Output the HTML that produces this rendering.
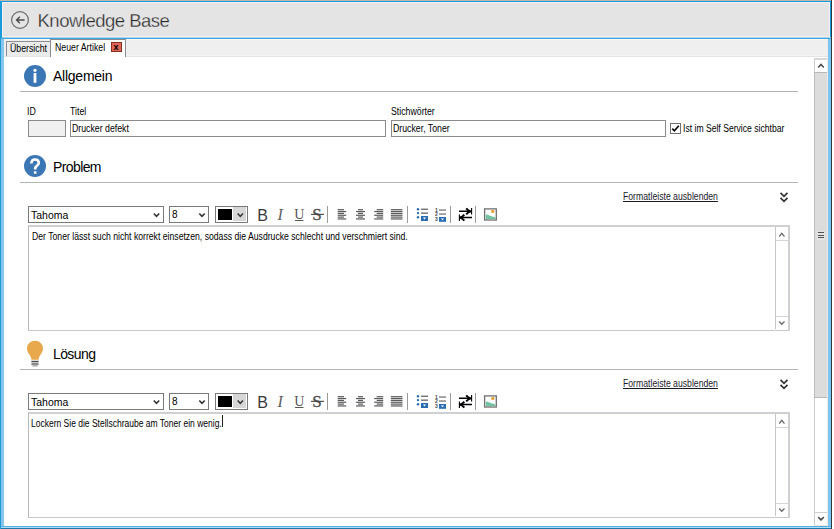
<!DOCTYPE html>
<html><head><meta charset="utf-8">
<style>
*{box-sizing:border-box;margin:0;padding:0}
html,body{width:834px;height:529px;overflow:hidden;background:#fff}
body{position:relative;font-family:"Liberation Sans",sans-serif;color:#000}
.a{position:absolute}
.t{position:absolute;white-space:nowrap;line-height:1}
.lnk{font-size:10px;text-decoration:underline;color:#1a1a2a;transform:scaleX(0.867);transform-origin:0 0}
.cmb{border:1px solid #7a7a7a;background:#fff}
.ta{border:2px solid #d0d0d4;border-left:1px solid #b8b8bc;border-bottom:1px solid #c8c8cc;background:#fff}
.txt{font-size:10px;transform:scaleX(0.866);transform-origin:0 0}
.s{font-size:10px;transform:scaleX(0.875);transform-origin:0 0}
.h{font-size:14px;letter-spacing:-0.6px}
</style></head><body>
<!-- window chrome -->
<div class="a" style="left:0;top:0;width:831px;height:1px;background:#bdb8b4"></div>
<div class="a" style="left:831px;top:0;width:1px;height:529px;background:#303840"></div>
<div class="a" style="left:832px;top:0;width:2px;height:529px;background:#fff"></div>
<!-- header -->
<div class="a" style="left:0;top:1px;width:831px;height:37px;background:#1a9ad6"></div>
<div class="a" style="left:2px;top:2px;width:828px;height:36px;background:#f2f0f6"></div>
<div class="a" style="left:3px;top:3px;width:826px;height:33px;background:#e4e4e4"></div>
<div class="a" style="left:3px;top:36px;width:826px;height:1px;background:#f4eeee"></div>
<div class="a" style="left:2px;top:37px;width:829px;height:1px;background:#a8d4ec"></div>
<div class="a" style="left:0;top:38px;width:831px;height:1px;background:#40a8da"></div>
<!-- content frame -->
<div class="a" style="left:0;top:39px;width:1px;height:490px;background:#1a9ad6"></div>
<div class="a" style="left:1px;top:39px;width:3px;height:487px;background:#86c6ec"></div>
<div class="a" style="left:828px;top:39px;width:3px;height:487px;background:#7ac6f0"></div>
<div class="a" style="left:1px;top:526px;width:830px;height:1px;background:#50b0e0"></div>
<div class="a" style="left:1px;top:527px;width:830px;height:1px;background:#a8dcfa"></div>
<div class="a" style="left:1px;top:528px;width:830px;height:1px;background:#2078a8"></div>

<!-- back icon -->
<svg class="a" style="left:0;top:0" width="40" height="40" viewBox="0 0 40 40">
<circle cx="20" cy="20" r="8.4" fill="none" stroke="#6a6a6a" stroke-width="1.2"/>
<path d="M16.6 20H24.6M19.8 16.8L16.6 20L19.8 23.2" fill="none" stroke="#4a4a4a" stroke-width="1.4"/>
</svg>
<div class="t" style="left:37.5px;top:12px;font-size:18.5px;color:#2a2a2a;letter-spacing:-0.5px;-webkit-text-stroke:0.3px #e4e4e4">Knowledge Base</div>

<!-- tab strip -->
<div class="a" style="left:4px;top:39px;width:824px;height:18px;background:#efefef"></div>
<div class="a" style="left:4px;top:39px;width:824px;height:1px;background:#faf6f6"></div>
<div class="a" style="left:4px;top:55px;width:824px;height:1px;background:#f4f4f4"></div>
<div class="a" style="left:4px;top:56px;width:824px;height:1px;background:#e4e4e4"></div>
<!-- Übersicht tab -->
<div class="a" style="left:6px;top:41px;width:45px;height:15px;border:1px solid #8c8c94;border-bottom:none;background:#ebebeb"></div>
<div class="t s" style="left:10px;top:44px">Übersicht</div>
<!-- Neuer Artikel tab -->
<div class="a" style="left:50px;top:39px;width:76px;height:18px;border:1px solid #8c8c94;border-bottom:none;background:#fff"></div>
<div class="t s" style="left:55px;top:43px">Neuer Artikel</div>
<div class="a" style="left:111px;top:42px;width:11px;height:10px;background:#df6656;border:1px solid #8a2e24"></div>
<div class="t" style="left:113.5px;top:42.5px;font-size:9px;font-weight:bold">x</div>


<!-- ===== Allgemein ===== -->
<svg class="a" style="left:23px;top:64px" width="24" height="24" viewBox="0 0 24 24">
<circle cx="12" cy="12" r="11" fill="#3c77b5"/>
<rect x="10.6" y="9" width="2.8" height="9.8" fill="#fff"/>
<circle cx="12" cy="6.3" r="1.6" fill="#fff"/>
</svg>
<div class="t h" style="left:53px;top:69px;letter-spacing:-0.25px">Allgemein</div>
<div class="a" style="left:20px;top:91px;width:778px;height:1px;background:#b4b4b4"></div>

<div class="t s" style="left:27px;top:107px">ID</div>
<div class="t s" style="left:70px;top:107px">Titel</div>
<div class="t s" style="left:391px;top:107px">Stichwörter</div>
<div class="a" style="left:28px;top:120px;width:38px;height:17px;border:1px solid #8a8a8a;background:#f0f0f0"></div>
<div class="a" style="left:70px;top:120px;width:316px;height:17px;border:1px solid #8a8a8a;background:#fff"></div>
<div class="t s" style="left:72px;top:124px">Drucker defekt</div>
<div class="a" style="left:391px;top:120px;width:275px;height:17px;border:1px solid #8a8a8a;background:#fff"></div>
<div class="t s" style="left:392.5px;top:124px">Drucker, Toner</div>
<div class="a" style="left:670px;top:123px;width:11px;height:11px;border:1px solid #707070;background:#fff"></div>
<svg class="a" style="left:670px;top:123px" width="11" height="11" viewBox="0 0 11 11"><path d="M2.3 5.6L4.4 7.8L8.8 2.8" fill="none" stroke="#000" stroke-width="1.6"/></svg>
<div class="t s" style="left:683px;top:124px;transform:scaleX(0.86)">Ist im Self Service sichtbar</div>

<!-- ===== Problem ===== -->
<svg class="a" style="left:23px;top:154px" width="24" height="24" viewBox="0 0 24 24">
<circle cx="12" cy="12" r="11" fill="#3c77b5"/>
<path d="M8.4 9.4C8.4 7 10 5.5 12.1 5.5C14.3 5.5 15.8 7 15.8 8.9C15.8 11.3 12.2 11.8 12.2 14.6V15.4" fill="none" stroke="#fff" stroke-width="2.6"/>
<rect x="10.9" y="17.3" width="2.6" height="2.4" fill="#fff"/>
</svg>
<div class="t h" style="left:53px;top:160px">Problem</div>
<div class="a" style="left:20px;top:182px;width:778px;height:1px;background:#b4b4b4"></div>

<div class="t lnk" style="left:623px;top:192px">Formatleiste ausblenden</div>
<svg class="a" style="left:776px;top:188px" width="16" height="16" viewBox="776 188 16 16"><path d="M780.5 192.8L784 196.3L787.5 192.8M780.5 197.9L784 201.4L787.5 197.9" fill="none" stroke="#333" stroke-width="1.7"/></svg>
<div class="a cmb" style="left:28px;top:206px;width:136px;height:17px"></div>
<div class="t" style="left:31px;top:210px;font-size:10.5px">Tahoma</div>
<div class="a cmb" style="left:169px;top:206px;width:40px;height:17px"></div>
<div class="t" style="left:172px;top:209.5px;font-size:10px">8</div>
<div class="a cmb" style="left:215px;top:206px;width:33px;height:17px"></div>
<div class="a" style="left:218px;top:209px;width:14px;height:11px;background:#000"></div>
<div class="a" style="left:233px;top:207px;width:13px;height:14px;background:#d6d6d6"></div>
<svg class="a" style="left:230px;top:208px" width="20" height="12" viewBox="230 208 20 12"><path d="M237.6 213.5L240.3 216.3L243 213.5" fill="none" stroke="#3a3a3a" stroke-width="1.6"/></svg>
<svg class="a" style="left:150px;top:208px" width="60" height="12" viewBox="150 208 60 12"><path d="M153.8 213.5L156.5 216.3L159.2 213.5M199.3 213.5L202 216.3L204.7 213.5" fill="none" stroke="#333" stroke-width="1.6"/></svg>
<svg class="a" style="left:250px;top:204px" width="250" height="20" viewBox="0 0 250 20"><text x="7.2" y="16.5" font-size="16" font-family="Liberation Sans" fill="#3a3a3a">B</text><text x="27.4" y="16" font-size="16" font-family="Liberation Serif" font-style="italic" fill="#606060">I</text><text x="44.2" y="14.8" font-size="14" font-family="Liberation Serif" fill="#555">U</text><rect x="45" y="16" width="8.5" height="1" fill="#555"/><text x="62.2" y="16.3" font-size="17" font-family="Liberation Serif" fill="#505050" stroke="#505050" stroke-width="0.35">S</text><rect x="61" y="9.8" width="13" height="1.1" fill="#444"/><rect x="77" y="2" width="1" height="17" fill="#9a9a9a"/><rect x="157" y="2" width="1" height="17" fill="#9a9a9a"/><rect x="200" y="2" width="1" height="17" fill="#9a9a9a"/><rect x="225" y="2" width="1" height="17" fill="#9a9a9a"/><rect x="87.7" y="5.1" width="6.3" height="1.2" fill="#5a5a5a"/><rect x="87.7" y="6.95" width="8.5" height="1.2" fill="#5a5a5a"/><rect x="87.7" y="8.8" width="6.3" height="1.2" fill="#5a5a5a"/><rect x="87.7" y="10.65" width="8.5" height="1.2" fill="#5a5a5a"/><rect x="87.7" y="12.5" width="6.3" height="1.2" fill="#5a5a5a"/><rect x="87.7" y="14.35" width="8.5" height="1.2" fill="#5a5a5a"/><rect x="108.0" y="5.1" width="5" height="1.2" fill="#5a5a5a"/><rect x="106.0" y="6.95" width="9" height="1.2" fill="#5a5a5a"/><rect x="108.0" y="8.8" width="5" height="1.2" fill="#5a5a5a"/><rect x="106.0" y="10.65" width="9" height="1.2" fill="#5a5a5a"/><rect x="108.0" y="12.5" width="5" height="1.2" fill="#5a5a5a"/><rect x="106.0" y="14.35" width="9" height="1.2" fill="#5a5a5a"/><rect x="126.7" y="5.1" width="6.5" height="1.2" fill="#5a5a5a"/><rect x="124.2" y="6.95" width="9" height="1.2" fill="#5a5a5a"/><rect x="126.7" y="8.8" width="6.5" height="1.2" fill="#5a5a5a"/><rect x="124.2" y="10.65" width="9" height="1.2" fill="#5a5a5a"/><rect x="126.7" y="12.5" width="6.5" height="1.2" fill="#5a5a5a"/><rect x="124.2" y="14.35" width="9" height="1.2" fill="#5a5a5a"/><rect x="140.8" y="5.1" width="11.7" height="1.2" fill="#5a5a5a"/><rect x="140.8" y="6.95" width="11.7" height="1.2" fill="#5a5a5a"/><rect x="140.8" y="8.8" width="11.7" height="1.2" fill="#5a5a5a"/><rect x="140.8" y="10.65" width="11.7" height="1.2" fill="#5a5a5a"/><rect x="140.8" y="12.5" width="11.7" height="1.2" fill="#5a5a5a"/><rect x="140.8" y="14.35" width="11.7" height="1.2" fill="#5a5a5a"/></svg>
<svg class="a" style="left:415px;top:206px" width="34" height="17" viewBox="0 0 34 17">
<circle cx="3" cy="3.3" r="1.2" fill="#2a6db5"/><circle cx="3" cy="7.1" r="1.2" fill="#2a6db5"/><circle cx="3" cy="11.2" r="1.2" fill="#2a6db5"/>
<rect x="6" y="2.6" width="7" height="1.3" fill="#666"/><rect x="6" y="6.5" width="7" height="1.3" fill="#666"/>
<rect x="6" y="10" width="7" height="5" fill="#2a6db5"/><path d="M7.8 11.6H11.2L9.5 13.4Z" fill="#fff"/>
<text x="20" y="6.3" font-size="5" font-family="Liberation Sans" font-weight="bold" fill="#444">1</text>
<text x="20" y="10.3" font-size="5" font-family="Liberation Sans" font-weight="bold" fill="#444">2</text>
<text x="20" y="14.6" font-size="5" font-family="Liberation Sans" font-weight="bold" fill="#444">3</text>
<rect x="24" y="3.4" width="7" height="1.3" fill="#777"/><rect x="24" y="7.4" width="7" height="1.3" fill="#777"/>
<rect x="24" y="11" width="7" height="4.8" fill="#2a6db5"/><path d="M25.8 12.5H29.2L27.5 14.3Z" fill="#fff"/>
</svg>
<svg class="a" style="left:452px;top:204px" width="25" height="20" viewBox="452 204 25 20">
<path d="M459 211.3H470M459.8 217.6H472" fill="none" stroke="#000" stroke-width="1.5"/>
<path d="M466.2 208.3Q468 210.6 470.8 211.3Q468 212 466.2 214.3M464.3 214.6Q462.6 216.9 459.8 217.6Q462.6 218.3 464.3 220.6" fill="none" stroke="#000" stroke-width="1.9"/>
<path d="M471.6 208V214.6M459.4 214.5V220.9" fill="none" stroke="#000" stroke-width="1.1"/>
</svg>
<svg class="a" style="left:480px;top:204px" width="20" height="20" viewBox="480 204 20 20">
<rect x="484.6" y="208.9" width="11.7" height="11.1" fill="#fff" stroke="#6e6e6e" stroke-width="1.3"/>
<circle cx="492.8" cy="211.4" r="1.7" fill="#e8a23a"/>
<path d="M485.8 214.6C488.5 214.6 491 216.8 495.3 217.3V219H485.8Z" fill="#72c3a0"/>
</svg>
<div class="a ta" style="left:28px;top:225px;width:762px;height:106px"></div>
<div class="t txt" style="left:31.5px;top:231.5px">Der Toner lässt such nicht korrekt einsetzen, sodass die Ausdrucke schlecht und verschmiert sind.</div>
<div class="a" style="left:775px;top:227px;width:1px;height:102px;background:#c8c8c8"></div>
<div class="a" style="left:776px;top:240px;width:12px;height:1px;background:#d4d4d4"></div>
<div class="a" style="left:776px;top:316px;width:12px;height:1px;background:#d4d4d4"></div>
<svg class="a" style="left:775px;top:225px" width="14" height="106" viewBox="775 225 14 106"><path d="M779.2 236.6L781.8 233.3L784.5 236.6M779.2 321.5L781.8 324.2L784.5 321.5" fill="none" stroke="#6a6a6a" stroke-width="1.3"/></svg>

<!-- ===== Lösung ===== -->
<svg class="a" style="left:25px;top:339px" width="20" height="29" viewBox="0 0 20 29">
<path d="M10 1.8C5.6 1.8 2 5 2 9.4C2 12.6 3.8 14.3 5 16.4C6 18 6.4 19.4 6.4 20.8H13.6C13.6 19.4 14 18 15 16.4C16.2 14.3 18 12.6 18 9.4C18 5 14.4 1.8 10 1.8Z" fill="#e8a84c"/>
<rect x="6.4" y="21.8" width="7.2" height="1.2" fill="#4a4a4a"/>
<rect x="6.4" y="23.5" width="7.2" height="2.8" fill="#8a8a8a"/>
<rect x="7.6" y="26.3" width="4.8" height="1.2" fill="#a0a0a0"/>
</svg>
<div class="t h" style="left:53px;top:347px">Lösung</div>
<div class="a" style="left:20px;top:369px;width:778px;height:1px;background:#b4b4b4"></div>
<div class="t lnk" style="left:623px;top:379px">Formatleiste ausblenden</div>
<svg class="a" style="left:776px;top:375px" width="16" height="16" viewBox="776 188 16 16"><path d="M780.5 192.8L784 196.3L787.5 192.8M780.5 197.9L784 201.4L787.5 197.9" fill="none" stroke="#333" stroke-width="1.7"/></svg>
<div class="a cmb" style="left:28px;top:393px;width:136px;height:17px"></div>
<div class="t" style="left:31px;top:397px;font-size:10.5px">Tahoma</div>
<div class="a cmb" style="left:169px;top:393px;width:40px;height:17px"></div>
<div class="t" style="left:172px;top:396.5px;font-size:10px">8</div>
<div class="a cmb" style="left:215px;top:393px;width:33px;height:17px"></div>
<div class="a" style="left:218px;top:396px;width:14px;height:11px;background:#000"></div>
<div class="a" style="left:233px;top:394px;width:13px;height:14px;background:#d6d6d6"></div>
<svg class="a" style="left:230px;top:395px" width="20" height="12" viewBox="230 208 20 12"><path d="M237.6 213.5L240.3 216.3L243 213.5" fill="none" stroke="#3a3a3a" stroke-width="1.6"/></svg>
<svg class="a" style="left:150px;top:395px" width="60" height="12" viewBox="150 208 60 12"><path d="M153.8 213.5L156.5 216.3L159.2 213.5M199.3 213.5L202 216.3L204.7 213.5" fill="none" stroke="#333" stroke-width="1.6"/></svg>
<svg class="a" style="left:250px;top:391px" width="250" height="20" viewBox="0 0 250 20"><text x="7.2" y="16.5" font-size="16" font-family="Liberation Sans" fill="#3a3a3a">B</text><text x="27.4" y="16" font-size="16" font-family="Liberation Serif" font-style="italic" fill="#606060">I</text><text x="44.2" y="14.8" font-size="14" font-family="Liberation Serif" fill="#555">U</text><rect x="45" y="16" width="8.5" height="1" fill="#555"/><text x="62.2" y="16.3" font-size="17" font-family="Liberation Serif" fill="#505050" stroke="#505050" stroke-width="0.35">S</text><rect x="61" y="9.8" width="13" height="1.1" fill="#444"/><rect x="77" y="2" width="1" height="17" fill="#9a9a9a"/><rect x="157" y="2" width="1" height="17" fill="#9a9a9a"/><rect x="200" y="2" width="1" height="17" fill="#9a9a9a"/><rect x="225" y="2" width="1" height="17" fill="#9a9a9a"/><rect x="87.7" y="5.1" width="6.3" height="1.2" fill="#5a5a5a"/><rect x="87.7" y="6.95" width="8.5" height="1.2" fill="#5a5a5a"/><rect x="87.7" y="8.8" width="6.3" height="1.2" fill="#5a5a5a"/><rect x="87.7" y="10.65" width="8.5" height="1.2" fill="#5a5a5a"/><rect x="87.7" y="12.5" width="6.3" height="1.2" fill="#5a5a5a"/><rect x="87.7" y="14.35" width="8.5" height="1.2" fill="#5a5a5a"/><rect x="108.0" y="5.1" width="5" height="1.2" fill="#5a5a5a"/><rect x="106.0" y="6.95" width="9" height="1.2" fill="#5a5a5a"/><rect x="108.0" y="8.8" width="5" height="1.2" fill="#5a5a5a"/><rect x="106.0" y="10.65" width="9" height="1.2" fill="#5a5a5a"/><rect x="108.0" y="12.5" width="5" height="1.2" fill="#5a5a5a"/><rect x="106.0" y="14.35" width="9" height="1.2" fill="#5a5a5a"/><rect x="126.7" y="5.1" width="6.5" height="1.2" fill="#5a5a5a"/><rect x="124.2" y="6.95" width="9" height="1.2" fill="#5a5a5a"/><rect x="126.7" y="8.8" width="6.5" height="1.2" fill="#5a5a5a"/><rect x="124.2" y="10.65" width="9" height="1.2" fill="#5a5a5a"/><rect x="126.7" y="12.5" width="6.5" height="1.2" fill="#5a5a5a"/><rect x="124.2" y="14.35" width="9" height="1.2" fill="#5a5a5a"/><rect x="140.8" y="5.1" width="11.7" height="1.2" fill="#5a5a5a"/><rect x="140.8" y="6.95" width="11.7" height="1.2" fill="#5a5a5a"/><rect x="140.8" y="8.8" width="11.7" height="1.2" fill="#5a5a5a"/><rect x="140.8" y="10.65" width="11.7" height="1.2" fill="#5a5a5a"/><rect x="140.8" y="12.5" width="11.7" height="1.2" fill="#5a5a5a"/><rect x="140.8" y="14.35" width="11.7" height="1.2" fill="#5a5a5a"/></svg>
<svg class="a" style="left:415px;top:393px" width="34" height="17" viewBox="0 0 34 17">
<circle cx="3" cy="3.3" r="1.2" fill="#2a6db5"/><circle cx="3" cy="7.1" r="1.2" fill="#2a6db5"/><circle cx="3" cy="11.2" r="1.2" fill="#2a6db5"/>
<rect x="6" y="2.6" width="7" height="1.3" fill="#666"/><rect x="6" y="6.5" width="7" height="1.3" fill="#666"/>
<rect x="6" y="10" width="7" height="5" fill="#2a6db5"/><path d="M7.8 11.6H11.2L9.5 13.4Z" fill="#fff"/>
<text x="20" y="6.3" font-size="5" font-family="Liberation Sans" font-weight="bold" fill="#444">1</text>
<text x="20" y="10.3" font-size="5" font-family="Liberation Sans" font-weight="bold" fill="#444">2</text>
<text x="20" y="14.6" font-size="5" font-family="Liberation Sans" font-weight="bold" fill="#444">3</text>
<rect x="24" y="3.4" width="7" height="1.3" fill="#777"/><rect x="24" y="7.4" width="7" height="1.3" fill="#777"/>
<rect x="24" y="11" width="7" height="4.8" fill="#2a6db5"/><path d="M25.8 12.5H29.2L27.5 14.3Z" fill="#fff"/>
</svg>
<svg class="a" style="left:452px;top:391px" width="25" height="20" viewBox="452 204 25 20">
<path d="M459 211.3H470M459.8 217.6H472" fill="none" stroke="#000" stroke-width="1.5"/>
<path d="M466.2 208.3Q468 210.6 470.8 211.3Q468 212 466.2 214.3M464.3 214.6Q462.6 216.9 459.8 217.6Q462.6 218.3 464.3 220.6" fill="none" stroke="#000" stroke-width="1.9"/>
<path d="M471.6 208V214.6M459.4 214.5V220.9" fill="none" stroke="#000" stroke-width="1.1"/>
</svg>
<svg class="a" style="left:480px;top:391px" width="20" height="20" viewBox="480 204 20 20">
<rect x="484.6" y="208.9" width="11.7" height="11.1" fill="#fff" stroke="#6e6e6e" stroke-width="1.3"/>
<circle cx="492.8" cy="211.4" r="1.7" fill="#e8a23a"/>
<path d="M485.8 214.6C488.5 214.6 491 216.8 495.3 217.3V219H485.8Z" fill="#72c3a0"/>
</svg>
<div class="a ta" style="left:28px;top:412px;width:762px;height:106px"></div>
<div class="t txt" style="left:30.5px;top:418.5px;transform:scaleX(0.85)">Lockern Sie die Stellschraube am Toner ein wenig.</div>
<div class="a" style="left:775px;top:414px;width:1px;height:102px;background:#c8c8c8"></div>
<div class="a" style="left:776px;top:427px;width:12px;height:1px;background:#d4d4d4"></div>
<div class="a" style="left:776px;top:503px;width:12px;height:1px;background:#d4d4d4"></div>
<svg class="a" style="left:775px;top:412px" width="14" height="106" viewBox="775 412 14 106"><path d="M779.2 423.6L781.8 420.3L784.5 423.6M779.2 508.5L781.8 511.2L784.5 508.5" fill="none" stroke="#6a6a6a" stroke-width="1.3"/></svg>

<div class="a" style="left:222px;top:415px;width:1px;height:12px;background:#222"></div>
<!-- main scrollbar -->
<div class="a" style="left:814px;top:58px;width:13px;height:468px;background:#fff;border-left:1px solid #cccccc;border-top:2px solid #d8d8d8"></div>
<div class="a" style="left:814px;top:72px;width:13px;height:326px;background:#dcdcdc;border-left:1px solid #bcbcbc;border-top:1px solid #b8b8b8;border-bottom:1px solid #b8b8b8"></div>
<div class="a" style="left:815px;top:512px;width:12px;height:1px;background:#d0d0d0"></div>
<div class="a" style="left:814px;top:525px;width:14px;height:1px;background:#ece4e4"></div>
<div class="a" style="left:827px;top:39px;width:1px;height:487px;background:#f0e8e8"></div>
<svg class="a" style="left:810px;top:58px" width="18" height="468" viewBox="810 58 18 468"><path d="M818.2 67.4L821 64.4L823.8 67.4M818.2 517.1L821 519.9L823.8 517.1" fill="none" stroke="#4a4a4a" stroke-width="1.5"/></svg>
<div class="a" style="left:817px;top:231px;width:8px;height:9px;background:#e4e4e4"></div>
<div class="a" style="left:818px;top:232px;width:6px;height:1px;background:#505050"></div>
<div class="a" style="left:818px;top:235px;width:6px;height:1px;background:#505050"></div>
<div class="a" style="left:818px;top:237px;width:6px;height:1px;background:#505050"></div>
</body></html>
